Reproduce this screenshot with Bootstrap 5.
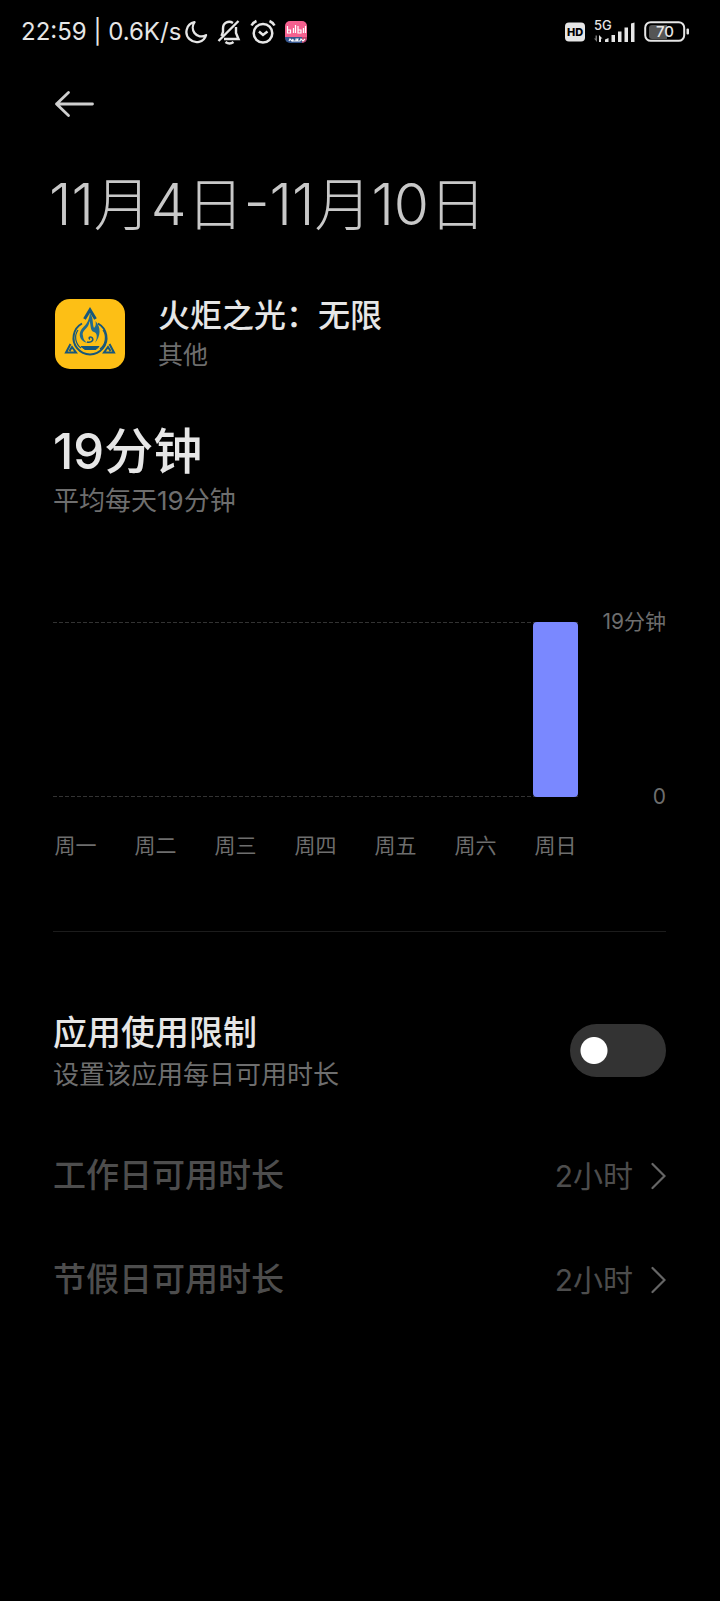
<!DOCTYPE html>
<html lang="zh-CN" data-bs-theme="dark">
<head>
<meta charset="utf-8">
<meta name="viewport" content="width=device-width, initial-scale=1">
<title>应用使用时长</title>
<link href="https://cdn.jsdelivr.net/npm/bootstrap@5.3.0/dist/css/bootstrap.min.css" rel="stylesheet">
<style>
  body { background: #000; color: #e6e6e6; font-family: Inter, "Noto Sans CJK SC", sans-serif; }
  .status { height: 64px; padding: 0 30px 0 21px; font-size: 24px; color: #e6e6e6; }
  .status svg { display: block; flex: none; }
  .status-icons { gap: 9px; margin-left: 3px; }
  .screen { padding: 0 54px 0 53px; }
  .back { height: 80px; }
  .week { margin: 21px 0 50px -4px; font-size: 57px; line-height: 80px; font-weight: 300; color: #c8c8c8; }
  .app-row { gap: 33px; margin-bottom: 49px; }
  .app-name { font-size: 32px; line-height: 42px; font-weight: 500; color: #e6e6e6; }
  .app-kind { font-size: 25px; line-height: 36px; }
  .dim { color: #6e6e6e; }
  .total { font-size: 49px; line-height: 60px; font-weight: 500; }
  .note { font-size: 26px; line-height: 38px; }
  .usage { margin-top: 102px; font-size: 21px; }
  .plot { height: 175px; }
  .plot-area { background:
      repeating-linear-gradient(90deg, #333 0 4px, transparent 4px 6px) top / 100% 1px no-repeat,
      repeating-linear-gradient(90deg, #333 0 4px, transparent 4px 6px) bottom / 100% 1px no-repeat; }
  .day-bar { width: 45px; background: #7a88ff; border-radius: 4px; }
  .scale { width: 88px; line-height: 30px; margin: -15px 0; }
  .days { margin: 34px 88px 70px 0; line-height: 30px; }
  .days span { width: 45px; text-align: center; white-space: nowrap; }
  .rule { border-top: 1px solid #1c1c1c; margin-bottom: 78px; }
  .limit-title { font-size: 34px; line-height: 46px; font-weight: 500; }
  .limit-switch.form-check-input { width: 96px; height: 53px; margin: 0 0 4px; border: 0; border-radius: 27px;
      background: #333 radial-gradient(circle, #fff 13px, transparent 14px) -24px center / 96px 53px no-repeat; }
  .limit-switch.form-check-input:checked { background-color: #7a88ff; background-position: 24px center; }
  .limits { margin-top: 30px; }
  .limit-row { height: 104px; color: #4d4d4d; font-size: 33px; font-weight: 500; }
  .limit-value { font-size: 30px; font-weight: 400; gap: 18px; }
</style>
</head>
<body>
<header class="status d-flex align-items-center justify-content-between">
  <div class="d-flex align-items-center">
    <span class="text-nowrap">22:59 | 0.6K/s</span>
    <div class="status-icons d-flex align-items-center">
      <svg width="24" height="24" viewBox="0 0 24 24" fill="none" stroke="#e6e6e6" stroke-width="2.300" stroke-linejoin="round"><path d="M10.500 2.200C2 4 0 14 5.500 19.200C11 24.300 20 22.500 22 15.200C18 17.500 13 16.500 10.500 13C8 9.500 8.500 5 10.500 2.200Z"/></svg>
      <svg width="24" height="26" viewBox="0 0 24 26" fill="none" stroke="#e6e6e6" stroke-width="2.400"><path d="M1.500 22L21.500 2M4.500 17L6 13V9.500C6 3 12 1.500 16 4M19 8V14L21.500 20H7"/><path d="M8.500 23Q12.500 26 16.500 23" stroke-width="2.600"/></svg>
      <svg width="26" height="26" viewBox="0 0 26 26" fill="none" stroke="#e6e6e6" stroke-width="2.500"><circle cx="13" cy="14.200" r="9.300"/><path d="M9 12.500L13 16L17.500 12.500M1.500 6.500Q3 3.500 6.500 2M24.500 6.500Q23 3.500 19.500 2"/></svg>
      <svg width="22" height="22" viewBox="0 0 22 22"><defs><clipPath id="tile"><rect width="22" height="22" rx="5"/></clipPath></defs><g clip-path="url(#tile)"><path fill="#f5608f" d="M0 0H22V16H0Z"/><path fill="#35568e" d="M0 16H22V22H0Z"/><path fill="#c3466f" d="M17 16H22V22H17Z"/></g><path d="M2.500 5V12H5.500V9H2.500M8.500 7V12M10.500 4V12M13 5V12H16V9H13M18.500 7V12M20.500 5V12" fill="none" stroke="#fff" stroke-width="1.200"/><path d="M4 20L5 18L7 20L8 18V20H11V18H13L12 20H15L16 18L18 20L20 18" fill="none" stroke="#fff" stroke-width="1.100"/></svg>
    </div>
  </div>
  <div class="d-flex align-items-center">
    <svg width="20" height="20" viewBox="0 0 20 20"><rect width="20" height="19" y="0.500" rx="4" fill="#e6e6e6"/><text x="10" y="14" text-anchor="middle" font-size="11" font-weight="800" fill="#000">HD</text></svg>
    <svg class="ms-2" width="43" height="30" viewBox="0 -2 43 30" fill="#e6e6e6"><text x="1" y="11" font-size="13" font-weight="500">5G</text><path d="M12 23V20.500L15.500 19V23ZM18.500 23V16H22V23ZM25 23V12.500H28.500V23ZM31.500 23V8.500H35V23ZM38 23V4.500L41.500 3.500V23Z"/><path d="M6 23V16L9.500 19.500H8V23Z"/><path fill="#777" d="M2.500 16.500V19.500H1L4 23V16.500Z"/></svg>
    <svg class="ms-2" width="46" height="22" viewBox="0 0 46 22"><path fill="#555" d="M8 4H23V18H8Q5 18 5 15V7Q5 4 8 4Z"/><rect x="1.200" y="1.200" width="39" height="18.600" rx="5.500" fill="none" stroke="#e6e6e6" stroke-width="2"/><rect x="42.500" y="7.500" width="2.500" height="6" rx="1" fill="#e6e6e6"/><text x="21" y="16" text-anchor="middle" font-size="15" font-weight="500" fill="#e6e6e6">70</text></svg>
  </div>
</header>

<main class="screen">
  <div class="back d-flex align-items-center">
    <button type="button" class="btn border-0 p-0" aria-label="返回">
      <svg class="d-block" width="42" height="28" viewBox="0 0 42 28" fill="none" stroke="#cfcfcf" stroke-width="2.800" stroke-linecap="round" stroke-linejoin="round"><path d="M15.500 2.500L3.500 14L15.500 25.500M3.500 14H39.500"/></svg>
    </button>
  </div>
  <h1 class="week text-nowrap">11月4日-11月10日</h1>

  <section class="app-row d-flex align-items-center">
    <svg class="flex-shrink-0" width="72" height="70" viewBox="-2 0 72 70" aria-hidden="true">
      <rect width="70" height="70" rx="15" fill="#fdbf15"/>
      <g fill="none" stroke="#17577c" stroke-width="2">
        <path d="M27 24.500A16.500 16.500 0 1 0 43 24.500"/>
        <path d="M23 31A13 13 0 0 0 26 49M48 31A14 14 0 0 1 45 50" stroke-width="1.200"/>
        <path d="M29.500 20L35 11L40.500 20" stroke-width="3"/>
        <path d="M15.500 45L11 53.500H21L17 48L14.500 52M54.500 45L59 53.500H49L53 48L55.500 52"/>
        <path d="M26 47.500H44L41 50.500H30Z" fill="#17577c" stroke-width="1"/>
        <path d="M32 43C37 44 39 41 37 38.500C35 37 33 39 35 40.500" stroke-width="1.500"/>
      </g>
      <path fill="#236b8d" d="M35 14C39 20 37 24 39 29C41 27 41 25 40.500 22C46 28 46 37 40 44C43 38 42 34 39 33C35 32 36 26 34.500 22C34 30 26 31 28 37C28 40 30 42 32 44C23 41 23 33 28.500 28C32 25 34 21 35 14Z"/>
    </svg>
    <div>
      <h2 class="app-name m-0">火炬之光：无限</h2>
      <p class="app-kind dim m-0">其他</p>
    </div>
  </section>

  <section>
    <div class="total">19分钟</div>
    <div class="note dim">平均每天19分钟</div>
  </section>

  <section class="usage dim">
    <div class="plot d-flex">
      <div class="plot-area flex-grow-1 d-flex justify-content-end align-items-end">
        <div class="day-bar" style="height: 100%"></div>
      </div>
      <div class="scale d-flex flex-column justify-content-between text-end">
        <span>19分钟</span><span>0</span>
      </div>
    </div>
    <div class="days d-flex justify-content-between">
      <span>周一</span><span>周二</span><span>周三</span><span>周四</span><span>周五</span><span>周六</span><span>周日</span>
    </div>
  </section>

  <div class="rule"></div>

  <section>
    <div class="d-flex align-items-center justify-content-between">
      <label for="limit">
        <span class="limit-title d-block">应用使用限制</span>
        <span class="note dim d-block">设置该应用每日可用时长</span>
      </label>
      <input class="limit-switch form-check-input flex-shrink-0" type="checkbox" role="switch" id="limit">
    </div>
    <div class="limits">
      <button type="button" class="limit-row btn border-0 p-0 w-100 d-flex align-items-center justify-content-between">
        <span>工作日可用时长</span>
        <span class="limit-value d-flex align-items-center">2小时
          <svg width="15" height="28" viewBox="0 0 15 28" fill="none" stroke="#666" stroke-width="2.200" stroke-linecap="round"><path d="M1.500 2L13.500 14L1.500 26"/></svg></span>
      </button>
      <button type="button" class="limit-row btn border-0 p-0 w-100 d-flex align-items-center justify-content-between">
        <span>节假日可用时长</span>
        <span class="limit-value d-flex align-items-center">2小时
          <svg width="15" height="28" viewBox="0 0 15 28" fill="none" stroke="#666" stroke-width="2.200" stroke-linecap="round"><path d="M1.500 2L13.500 14L1.500 26"/></svg></span>
      </button>
    </div>
  </section>
</main>
<script src="https://cdn.jsdelivr.net/npm/bootstrap@5.3.0/dist/js/bootstrap.bundle.min.js"></script>
</body>
</html>
